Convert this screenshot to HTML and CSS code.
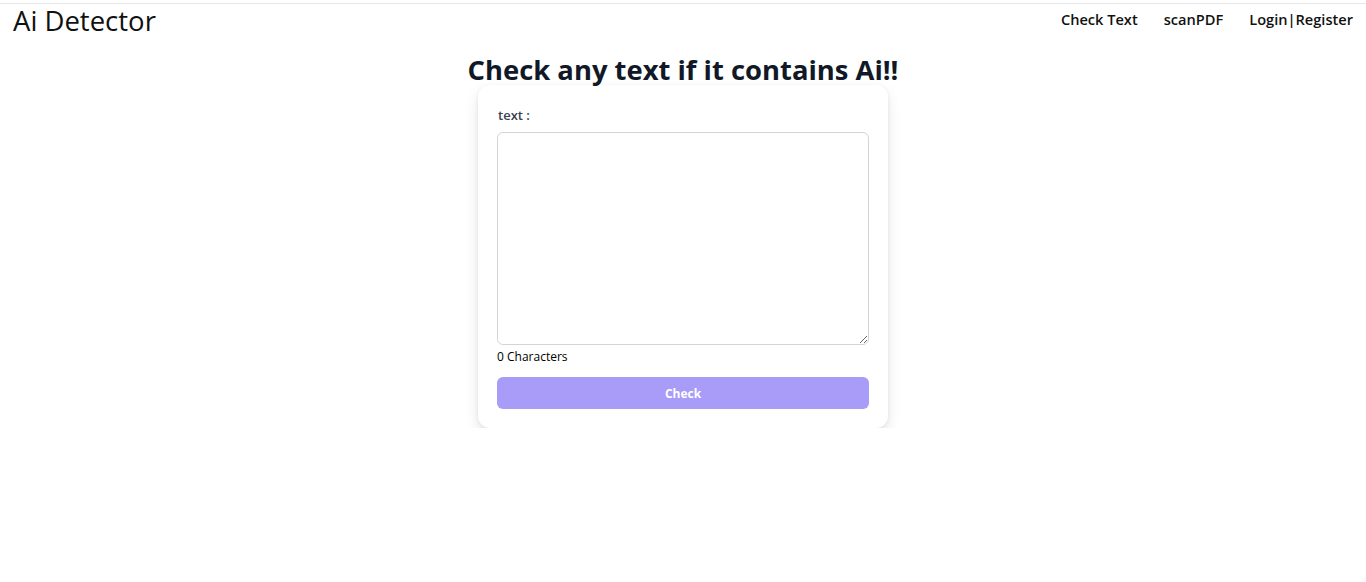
FILE: index.html
```html
<!DOCTYPE html>
<html lang="en">
<head>
<meta charset="utf-8">
<title>Ai Detector</title>
<link rel="stylesheet" href="styles.css">
</head>
<body>
<header class="topbar">
  <div class="brand">Ai Detector</div>
  <nav class="nav">
    <a class="nav-link" href="#">Check Text</a>
    <a class="nav-link" href="#">scanPDF</a>
    <a class="nav-link" href="#">Login|Register</a>
  </nav>
</header>
<main class="main">
  <h1 class="title">Check any text if it contains Ai!!</h1>
  <section class="card">
    <label class="label" for="txt">text :</label>
    <textarea id="txt" class="input"></textarea>
    <div class="count">0 Characters</div>
    <button class="btn" type="button">Check</button>
  </section>
</main>
</body>
</html>
```

FILE: styles.css
```css
html, body {
  margin: 0;
  padding: 0;
  background: #ffffff;
}
body {
  font-family: "Open Sans", "Noto Sans", sans-serif;
  color: #000;
  padding-top: 3px;
}
.topbar {
  border-top: 1px solid #e5e7eb;
  display: flex;
  justify-content: space-between;
  align-items: center;
  height: 40px;
  padding: 0 13px;
}
.brand {
  font-size: 27.5px;
  font-weight: 400;
  color: #111;
  line-height: 36px;
  margin-top: -6px;
}
.nav {
  display: flex;
  gap: 26px;
  margin-top: -10px;
}
.nav-link {
  color: #111;
  text-decoration: none;
  font-size: 14.6px;
  font-weight: 600;
}
.main {
  display: flex;
  flex-direction: column;
  align-items: center;
}
.title {
  margin: 8px 0 0;
  font-size: 27.4px;
  line-height: 36px;
  font-weight: 700;
  color: #111827;
  position: relative;
  z-index: 1;
}
.card {
  margin-top: -3px;
  width: 372px;
  padding: 21px 19px 19px;
  background: #fff;
  border-radius: 12px;
  box-shadow: 0 6px 14px rgba(0,0,0,0.10), 0 1px 4px rgba(0,0,0,0.06);
  display: flex;
  flex-direction: column;
}
.label {
  font-size: 13px;
  font-weight: 600;
  color: #374151;
  margin-left: 1px;
  line-height: 18px;
}
.input {
  margin-top: 8px;
  box-sizing: border-box;
  width: 372px;
  height: 213px;
  border: 1px solid #d1d5db;
  border-radius: 6px;
  padding: 8px;
  font-family: inherit;
  resize: vertical;
}
.count {
  font-size: 12px;
  margin-top: 3px;
  line-height: 18px;
  color: #000;
}
.btn {
  margin-top: 11px;
  height: 32px;
  width: 372px;
  border: none;
  border-radius: 6px;
  background: #a89cf8;
  color: #fff;
  font-family: inherit;
  font-weight: 700;
  font-size: 12px;
}
```
